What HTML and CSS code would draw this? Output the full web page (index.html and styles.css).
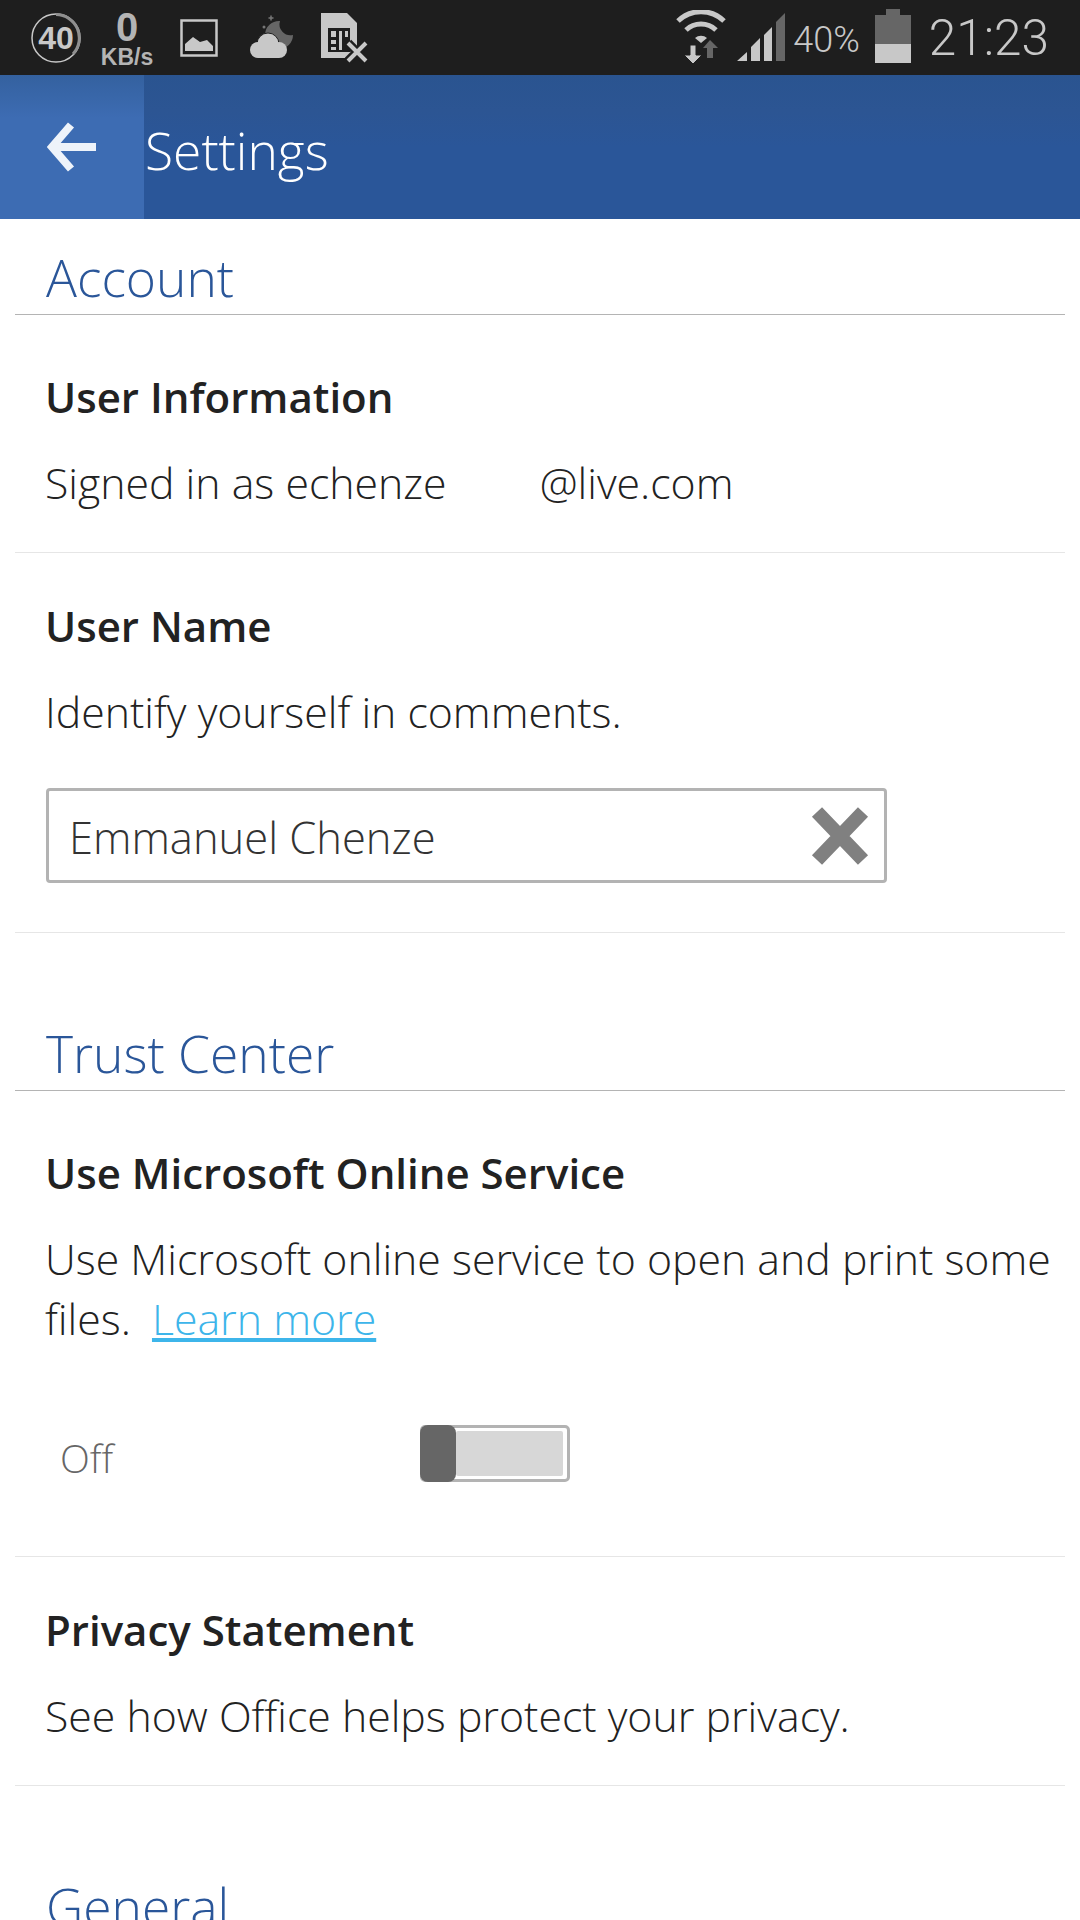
FILE: index.html
```html
<!DOCTYPE html>
<html lang="en">
<head>
    <meta charset="UTF-8">
    <meta name="viewport" content="width=device-width, initial-scale=1.0">
    <title>Settings</title>
    <link rel="stylesheet" href="styles.css">
</head>
<body>
    <div class="statusbar">
        <div class="status-left">
            <svg class="ic-count" width="50" height="50" viewBox="0 0 50 50">
                <circle cx="25" cy="25" r="24" fill="none" stroke="#c8c8c8" stroke-width="1.5"/>
                <path d="M25 1.500 A23.500 23.500 0 0 1 42 41" fill="none" stroke="#8f8f8f" stroke-width="3"/>
                <text x="25" y="36" text-anchor="middle" class="count-num">40</text>
            </svg>
            <div class="speed">
                <span class="speed-num">0</span>
                <span class="speed-unit">KB/s</span>
            </div>
            <svg class="ic-image" width="38" height="38" viewBox="0 0 38 38">
                <rect x="1.500" y="1.500" width="35" height="35" fill="none" stroke="#c8c8c8" stroke-width="2.500"/>
                <path d="M5 32 V25 L13 18 L20 23 L27 21 L33 27 V32 Z" fill="#c8c8c8"/>
            </svg>
            <svg class="ic-weather" width="46" height="44" viewBox="0 0 46 44">
                <path d="M30 6 A14 14 0 1 0 43 20 A11 11 0 0 1 30 6 Z" fill="#666"/>
                <path d="M21 0.500 V5.500 M18.500 3 H23.500" stroke="#777" stroke-width="1.500"/>
                <circle cx="14" cy="12" r="1.500" fill="#777"/>
                <circle cx="18" cy="29" r="11" fill="#c8c8c8" stroke="#1e1e1e" stroke-width="1"/>
                <circle cx="8" cy="35" r="8" fill="#c8c8c8"/>
                <circle cx="29" cy="35" r="8" fill="#c8c8c8"/>
                <rect x="8" y="32" width="21" height="11" fill="#c8c8c8"/>
            </svg>
            <svg class="ic-sim" width="48" height="52" viewBox="0 0 48 52">
                <path d="M0 0 H26 L36 10 V45 H0 Z" fill="#c8c8c8"/>
                <path d="M7 15 H29 V39 H7 Z" fill="#1e1e1e"/>
                <path d="M10 18 H15 V24 H10 Z M10 27 H15 V31 H10 Z M10 34 H15 V37 H10 Z M18 18 H21 V37 H18 Z M24 18 H27 V24 H24 Z" fill="#c8c8c8"/>
                <path d="M27 30 L45 48 M45 30 L27 48" stroke="#1e1e1e" stroke-width="9"/>
                <path d="M27 30 L45 48 M45 30 L27 48" stroke="#c8c8c8" stroke-width="4"/>
            </svg>
        </div>
        <div class="status-right">
            <svg class="ic-wifi" width="50" height="54" viewBox="0 0 50 54">
                <path d="M2 11 A33 33 0 0 1 48 11" fill="none" stroke="#c8c8c8" stroke-width="5"/>
                <path d="M10 20 A22 22 0 0 1 40 20" fill="none" stroke="#c8c8c8" stroke-width="5"/>
                <path d="M19 28 A9 9 0 0 1 31 28 L25 33 Z" fill="#c8c8c8"/>
                <path d="M27 38 L34 30 L42 38 H37 V48 H31 V38 Z" fill="#666"/>
                <path d="M14 35 H20 V45 H26 L17 54 L8 45 H14 Z" fill="#c8c8c8" stroke="#1e1e1e" stroke-width="1"/>
            </svg>
            <svg class="ic-signal" width="48" height="48" viewBox="0 0 48 48">
                <path d="M0 48 L10 39 V48 Z M14 48 V34 L23 25 V48 Z M27 48 V22 L35 14 V48 Z" fill="#c8c8c8"/>
                <path d="M39 48 V9 L48 0 V48 Z" fill="#666"/>
            </svg>
            <span class="battery-pct">40%</span>
            <svg class="ic-battery" width="36" height="54" viewBox="0 0 36 54">
                <path d="M11 0 H25 V6 H36 V35 H0 V6 H11 Z" fill="#666"/>
                <rect x="0" y="35" width="36" height="19" fill="#c8c8c8"/>
            </svg>
            <span class="clock">21:23</span>
        </div>
    </div>

    <div class="header">
        <div class="back">
            <svg width="50" height="52" viewBox="0 0 50 52">
                <path d="M24 4 L5 26 L24 48 M6 26 H49" fill="none" stroke="#eef3fa" stroke-width="8"/>
            </svg>
        </div>
        <div class="header-title">Settings</div>
    </div>

    <div class="content">
        <div class="section-title first">Account</div>
        <div class="item">
            <div class="item-title">User Information</div>
            <div class="item-desc">Signed in as echenze <span class="redacted"></span>@live.com</div>
        </div>
        <div class="item item-input">
            <div class="item-title">User Name</div>
            <div class="item-desc">Identify yourself in comments.</div>
            <div class="name-field">
                <span>Emmanuel Chenze</span>
                <svg width="58" height="58" viewBox="0 0 58 58">
                    <path d="M6 5 L52 53 M52 5 L6 53" stroke="#808080" stroke-width="14"/>
                </svg>
            </div>
        </div>

        <div class="section-title">Trust Center</div>
        <div class="item item-toggle">
            <div class="item-title">Use Microsoft Online Service</div>
            <div class="item-desc">Use Microsoft online service to open and print some files. <a class="link" href="#">Learn more</a></div>
            <div class="toggle-row">
                <span class="toggle-label">Off</span>
                <div class="toggle">
                    <div class="toggle-thumb"></div>
                    <div class="toggle-track"></div>
                </div>
            </div>
        </div>
        <div class="item">
            <div class="item-title">Privacy Statement</div>
            <div class="item-desc">See how Office helps protect your privacy.</div>
        </div>

        <div class="section-title">General</div>
    </div>
</body>
</html>
```

FILE: styles.css
```css
html, body {
    margin: 0;
    height: 1920px;
    overflow: hidden;
    background: #fff;
}
body {
    font-family: "Open Sans", "Liberation Sans", sans-serif;
    color: #222;
}
.statusbar {
    height: 75px;
    background: #1e1e1e;
    display: flex;
    justify-content: space-between;
    color: #c8c8c8;
}
.status-left {
    display: flex;
    align-items: flex-start;
    padding-left: 31px;
}
.status-right {
    display: flex;
    align-items: flex-start;
    padding-right: 31px;
}
.ic-count { margin-top: 13px; }
.count-num {
    font: bold 32px "Liberation Sans", sans-serif;
    fill: #c8c8c8;
}
.speed {
    width: 56px;
    margin: 7px 0 0 18px;
    display: flex;
    flex-direction: column;
    align-items: center;
    font-family: "Liberation Sans", sans-serif;
    font-weight: bold;
    color: #b4b4b4;
}
.speed-num { font-size: 40px; line-height: 40px; }
.speed-unit { font-size: 23px; line-height: 20px; }
.ic-image { margin: 19px 0 0 25px; }
.ic-weather { margin: 15px 0 0 32px; }
.ic-sim { margin: 13px 0 0 25px; }
.ic-wifi { margin: 10px 0 0 0; }
.ic-signal { margin: 13px 0 0 11px; }
.battery-pct {
    font: 300 36px/40px Roboto, sans-serif;
    margin: 20px 0 0 8px;
}
.ic-battery { margin: 9px 0 0 15px; }
.clock {
    font: 300 49.500px/56px Roboto, sans-serif;
    margin: 10px 0 0 18px;
}

.header {
    height: 144px;
    display: flex;
    background: linear-gradient(#2a5490, #2c5593 25%, #2a5699 50%);
    color: #fff;
}
.back {
    width: 144px;
    height: 144px;
    background: linear-gradient(#34619f, #3d6cb3 30%);
    display: flex;
    align-items: center;
    justify-content: center;
}
.header-title {
    font-weight: 300;
    font-size: 51.500px;
    line-height: 150px;
    padding-left: 1px;
}

.content {
    padding: 0 15px;
}
.section-title {
    margin-top: 62px;
    height: 96px;
    box-sizing: border-box;
    padding-left: 31px;
    border-bottom: 1px solid #b4b4b4;
    margin-bottom: 9px;
    font-weight: 300;
    font-size: 51.500px;
    line-height: 116px;
    color: #2a5699;
}
.section-title.first {
    margin-top: 0;
}
.item {
    padding: 48px 10px 39px 31px;
    border-bottom: 1px solid #e6e6e6;
}
.item-title {
    margin-left: -1px;
    font-weight: 600;
    font-size: 42px;
    line-height: 50px;
}
.item-desc {
    margin: 31px 0 0 -1px;
    font-weight: 350;
    font-size: 42.800px;
    line-height: 60px;
    color: #222;
}
.redacted {
    display: inline-block;
    width: 82px;
}
.item-input {
    padding-bottom: 49px;
}
.name-field {
    margin-top: 46px;
    width: 841px;
    height: 95px;
    box-sizing: border-box;
    border: 3px solid #b3b3b3;
    border-radius: 4px;
    padding: 4px 15px 0 20px;
    display: flex;
    align-items: center;
    justify-content: space-between;
    font-weight: 350;
    font-size: 43.500px;
    color: #333;
}
.name-field svg {
    margin-top: -4px;
}
.link {
    margin-left: 10px;
    color: #3db5ea;
    text-underline-offset: 3px;
}
.item-toggle {
    padding-bottom: 74px;
}
.toggle-row {
    margin-top: 76px;
    display: flex;
    align-items: center;
    height: 57px;
}
.toggle-label {
    width: 374px;
    padding: 8px 0 0 14px;
    box-sizing: border-box;
    font-weight: 300;
    font-size: 39px;
    color: #666;
}
.toggle {
    width: 150px;
    height: 57px;
    box-sizing: border-box;
    border: 3px solid #b3b3b3;
    border-radius: 5px;
    display: flex;
}
.toggle-thumb {
    width: 36px;
    height: 57px;
    margin: -3px 0 0 -3px;
    background: #666;
    border-radius: 8px;
}
.toggle-track {
    width: 107px;
    height: 45px;
    margin-top: 3px;
    background: #d7d7d7;
    border-radius: 2px;
}
```
